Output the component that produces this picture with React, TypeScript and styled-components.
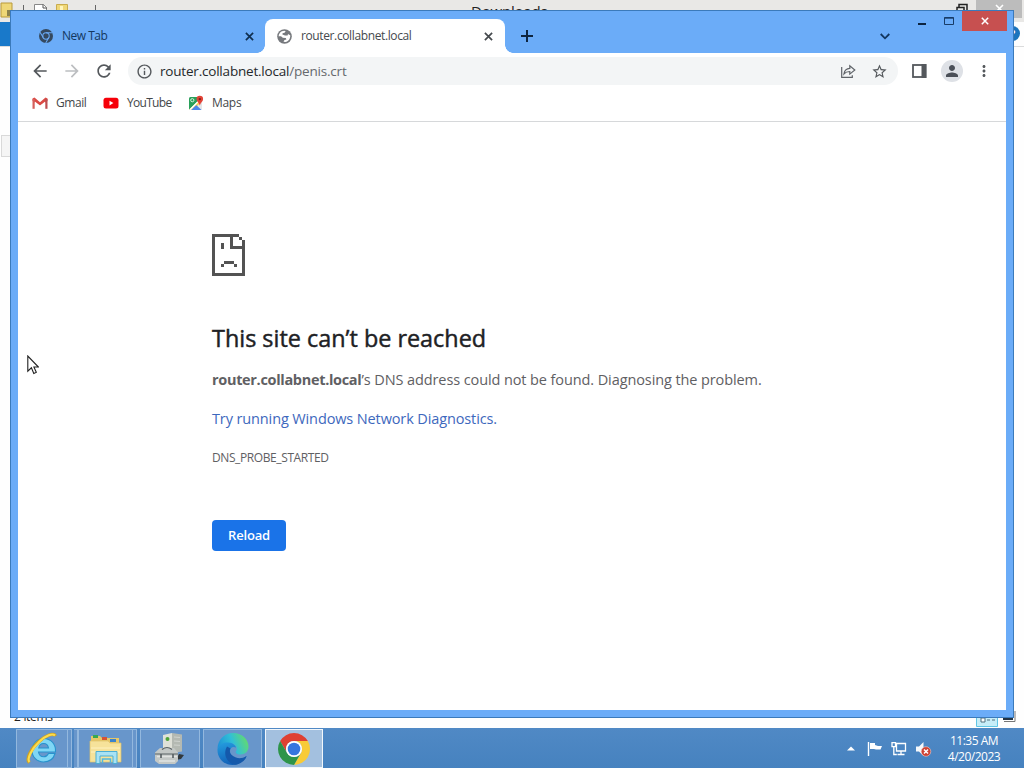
import React from 'react';
import styled, { createGlobalStyle } from 'styled-components';

const GlobalStyle = createGlobalStyle`
  * {
    box-sizing: border-box;
  }

  body {
    margin: 0;
    overflow: hidden;
    font-family: 'Open Sans', 'Noto Sans', sans-serif;
  }

  svg {
    display: block;
    flex: none;
  }
`;

const Desktop = styled.div`
  position: relative;
  display: flex;
  flex-direction: column;
  width: 1024px;
  height: 768px;
  overflow: hidden;
  background: #fff;
`;

const Label = styled.span<{ $size?: number; $spacing?: number }>`
  font-size: ${({ $size = 12 }) => $size}px;
  letter-spacing: ${({ $spacing = 0 }) => $spacing}px;
  line-height: 16px;
  white-space: nowrap;
`;

/* Explorer window behind the browser */

const Explorer = styled.div`
  display: flex;
  flex-direction: column;
  height: 728px;
  background: #fefefe;
`;

const ExplorerTitle = styled.div`
  display: flex;
  height: 22px;
  background: #e9e8e6;
  color: #222;
`;

const ExplorerTitleText = styled.div`
  display: flex;
  flex: 1;
  align-items: center;
  height: 22px;
  padding-left: 371px;
`;

const ExplorerButtons = styled.div`
  display: flex;
  gap: 8px;
  padding-right: 2px;
`;

const ExplorerClose = styled.div`
  display: flex;
  justify-content: center;
  width: 46px;
  height: 18px;
  background: #bcbcbc;
`;

const Ribbon = styled.div`
  display: flex;
  justify-content: space-between;
  height: 25px;
  border-bottom: 1px solid #dadbdc;
`;

const FileTab = styled.div`
  width: 54px;
  height: 24px;
  background: #1979ca;
`;

const HelpBadge = styled.div`
  width: 15px;
  height: 15px;
  margin: 4px 4px 0 0;
  border-radius: 50%;
  background: #1c74bd;
  color: #fff;
  font-size: 11px;
  font-weight: 700;
  line-height: 15px;
  text-align: center;
`;

const AddressStub = styled.div`
  width: 40px;
  height: 22px;
  margin: 88px 0 0 1px;
  border: 1px solid #d9d9d9;
  background: #f5f5f5;
`;

const ExplorerStatus = styled.div`
  display: flex;
  justify-content: space-between;
  height: 20px;
  margin-top: auto;
  padding: 0 8px 0 14px;
  color: #222;
`;

const ItemCount = styled(Label)`
  margin-top: 1px;
`;

const ViewSwitch = styled.div`
  display: flex;
  gap: 4px;
`;

/* Browser window */

const Browser = styled.div`
  position: absolute;
  top: 10px;
  left: 10px;
  display: flex;
  flex-direction: column;
  width: 1004px;
  height: 708px;
  padding: 0 7px 7px;
  border: 1px solid #3b7abb;
  background: #6bacf8;
`;

const TitleBar = styled.div`
  display: flex;
  flex: none;
  height: 42px;
`;

const Tab = styled.div<{ $active?: boolean }>`
  position: relative;
  display: flex;
  align-items: center;
  width: ${({ $active }) => ($active ? 240 : 247)}px;
  height: 34px;
  margin-top: 8px;
  padding: 0 ${({ $active }) => ($active ? 12 : 11)}px 0 ${({ $active }) => ($active ? 12 : 21)}px;
  border-radius: 8px 8px 0 0;
  background: ${({ $active }) => ($active ? '#fff' : 'transparent')};
  color: ${({ $active }) => ($active ? '#45494d' : '#14385f')};

  &::before,
  &::after {
    content: '';
    position: absolute;
    bottom: 0;
    display: ${({ $active }) => ($active ? 'block' : 'none')};
    width: 8px;
    height: 8px;
  }

  &::before {
    left: -8px;
    background: radial-gradient(circle at 0 0, transparent 7.5px, #fff 8px);
  }

  &::after {
    right: -8px;
    background: radial-gradient(circle at 100% 0, transparent 7.5px, #fff 8px);
  }
`;

const TabTitle = styled(Label)`
  flex: 1;
  margin-left: 9px;
`;

const NewTabButton = styled.div`
  margin: 19px 0 0 16px;
`;

const TabSearch = styled.div`
  margin: 22px 18px 0 auto;
`;

const Caption = styled.div`
  display: flex;
  align-items: flex-start;
  margin-right: -1px;
`;

const CaptionButton = styled.div<{ $close?: boolean }>`
  display: flex;
  align-items: center;
  justify-content: center;
  width: ${({ $close }) => ($close ? 45 : 27)}px;
  height: 20px;
  background: ${({ $close }) => ($close ? '#c75050' : 'transparent')};
`;

const Client = styled.div`
  display: flex;
  flex: 1;
  flex-direction: column;
  background: #fff;
`;

const Toolbar = styled.div`
  display: flex;
  align-items: center;
  height: 36px;
  padding: 0 12px;
`;

const NavButtons = styled.div`
  display: flex;
  gap: 12px;
  margin-right: 14px;
`;

const Omnibox = styled.div`
  display: flex;
  align-items: center;
  width: 770px;
  height: 28px;
  padding: 0 10px 0 8px;
  border-radius: 14px;
  background: #f3f5f6;
  color: #25282b;
`;

const Url = styled(Label)`
  flex: 1;
  margin-left: 7px;

  span {
    color: #65696d;
  }
`;

const OmniboxActions = styled.div`
  display: flex;
  align-items: center;
  gap: 15px;
`;

const Actions = styled.div`
  display: flex;
  align-items: center;
  margin-left: 14px;
`;

const Avatar = styled.div`
  display: flex;
  align-items: center;
  justify-content: center;
  width: 22px;
  height: 22px;
  margin: 0 12px 0 14px;
  border-radius: 50%;
  background: #dee1e6;
`;

const Bookmarks = styled.div`
  display: flex;
  align-items: center;
  height: 33px;
  padding: 0 14px 5px;
  border-bottom: 1px solid #d6d8da;
`;

const Bookmark = styled.div<{ $width: number }>`
  display: flex;
  align-items: center;
  gap: 8px;
  width: ${({ $width }) => $width}px;
  color: #44474a;
`;

const ErrorPage = styled.main`
  display: flex;
  flex-direction: column;
  align-items: flex-start;
  padding: 112px 0 0 194px;
  color: #5f6063;
`;

const Heading = styled.h1`
  margin: 46px 0 0;
  color: #202124;
  font-size: 23.4px;
  font-weight: 400;
  line-height: 32px;
  white-space: nowrap;
  -webkit-text-stroke: 0.45px #202124;
`;

const Message = styled.p`
  margin: 14px 0 0;
  font-size: 14.5px;
  letter-spacing: -0.1px;
  line-height: 24px;
  white-space: nowrap;

  strong {
    letter-spacing: -0.32px;
  }
`;

const Suggestion = styled.a`
  margin-top: 15px;
  color: #3d68bd;
  font-size: 14.5px;
  letter-spacing: -0.12px;
  line-height: 24px;
  white-space: nowrap;
`;

const ErrorCode = styled.div`
  margin-top: 15px;
  font-size: 12px;
  letter-spacing: -0.4px;
  line-height: 24px;
`;

const ReloadButton = styled.button`
  width: 74px;
  height: 31px;
  margin-top: 50px;
  padding: 0 0 2px;
  border: 0;
  border-radius: 4px;
  background: #1a73e8;
  color: #fff;
  font-family: 'Open Sans', sans-serif;
  font-size: 13px;
  font-weight: 600;
  letter-spacing: -0.2px;
`;

const Pointer = styled.div`
  position: absolute;
  top: 355px;
  left: 27px;
`;

/* Taskbar */

const Taskbar = styled.div`
  display: flex;
  height: 40px;
  padding-left: 16px;
  background: linear-gradient(#5089c5, #4682bf);
`;

const TaskButton = styled.div<{ $width: number; $gap: number; $active?: boolean }>`
  display: flex;
  align-items: center;
  justify-content: center;
  width: ${({ $width }) => $width}px;
  height: 39px;
  margin: 1px ${({ $gap }) => $gap}px 0 0;
  border: 1px solid ${({ $active }) => ($active ? '#f2f7fb' : '#93b8de')};
  background: ${({ $active }) => ($active ? '#a3c0df' : '#6896cb')};
`;

const StackEdge = styled.div<{ $gap: number }>`
  width: 4px;
  height: 39px;
  margin: 1px ${({ $gap }) => $gap}px 0 0;
  border: 1px solid #93b8de;
  border-left: 0;
  background: #6896cb;
`;

const Tray = styled.div`
  display: flex;
  align-items: center;
  gap: 8px;
  margin-left: auto;
  padding: 1px 23px 0 0;
  color: #fff;
`;

const TrayArrow = styled.div`
  margin-right: 4px;
`;

const Clock = styled.div`
  display: flex;
  flex-direction: column;
  align-items: center;
  width: 54px;
  margin-left: 7px;
`;

interface IconProps {
  d: string;
  size?: number;
  color?: string;
}

const Icon: React.FC<IconProps> = ({ d, size = 20, color = '#54585c' }) => (
  <svg width={size} height={size} viewBox="0 0 24 24" fill={color}>
    <path d={d} />
  </svg>
);

const paths = {
  back: 'M20 11H7.83l5.59-5.59L12 4l-8 8 8 8 1.41-1.41L7.83 13H20v-2z',
  forward: 'M12 4l-1.41 1.41L16.17 11H4v2h12.17l-5.58 5.59L12 20l8-8z',
  reload:
    'M17.65 6.35C16.2 4.9 14.21 4 12 4c-4.42 0-7.99 3.58-7.99 8s3.57 8 7.99 8c3.73 0 6.84-2.55 7.73-6h-2.08c-.82 2.33-3.04 4-5.65 4-3.31 0-6-2.69-6-6s2.69-6 6-6c1.66 0 3.14.69 4.22 1.78L13 11h7V4l-2.35 2.35z',
  info: 'M11 7h2v2h-2zm0 4h2v6h-2zm1-9C6.48 2 2 6.48 2 12s4.48 10 10 10 10-4.48 10-10S17.52 2 12 2zm0 18c-4.41 0-8-3.59-8-8s3.59-8 8-8 8 3.59 8 8-3.59 8-8 8z',
  star: 'M22 9.24l-7.19-.62L12 2 9.19 8.63 2 9.24l5.46 4.73L5.82 21 12 17.27 18.18 21l-1.63-7.03L22 9.24zM12 15.4l-3.76 2.27 1-4.28-3.32-2.88 4.38-.38L12 6.1l1.71 4.04 4.38.38-3.32 2.88 1 4.28L12 15.4z',
  person:
    'M12 12c2.21 0 4-1.79 4-4s-1.79-4-4-4-4 1.79-4 4 1.79 4 4 4zm0 2c-2.67 0-8 1.34-8 4v2h16v-2c0-2.66-5.33-4-8-4z',
  more: 'M12 8c1.1 0 2-.9 2-2s-.9-2-2-2-2 .9-2 2 .9 2 2 2zm0 2c-1.1 0-2 .9-2 2s.9 2 2 2 2-.9 2-2-.9-2-2-2zm0 6c-1.1 0-2 .9-2 2s.9 2 2 2 2-.9 2-2-.9-2-2-2z',
};

interface ChromeLogoProps {
  size: number;
  colors: string[];
}

const ChromeLogo: React.FC<ChromeLogoProps> = ({ size, colors }) => {
  const [red, yellow, green, ring, center] = colors;
  return (
    <svg width={size} height={size} viewBox="0 0 48 48">
      <path fill={red} d="M24 12H44.78A24 24 0 0 0 3.22 12L13.61 30A12 12 0 0 1 24 12z" />
      <path fill={yellow} d="M34.39 30L24 48A24 24 0 0 0 44.78 12H24A12 12 0 0 1 34.39 30z" />
      <path fill={green} d="M13.61 30L3.22 12A24 24 0 0 0 24 48L34.39 30A12 12 0 0 1 13.61 30z" />
      <circle cx="24" cy="24" r="12" fill={ring} />
      <circle cx="24" cy="24" r="9.5" fill={center} />
    </svg>
  );
};

const MonoChromeLogo: React.FC = () => (
  <svg width="14" height="14" viewBox="0 0 48 48">
    <circle cx="24" cy="24" r="24" fill="#35495f" />
    <g stroke="#6bacf8" strokeWidth="3.5" fill="none">
      <path d="M24 13H46M14.5 29.5L3.5 11M33.5 29.5L23 48" />
      <circle cx="24" cy="24" r="11" />
    </g>
  </svg>
);

const Close: React.FC<{ color: string; size?: number }> = ({ color, size = 9 }) => (
  <svg width={size} height={size} viewBox="0 0 10 10" stroke={color} strokeWidth="1.9">
    <path d="M1 1l8 8M9 1l-8 8" />
  </svg>
);

const Globe: React.FC = () => (
  <svg width="15" height="15" viewBox="0 0 15 15">
    <circle cx="7.5" cy="7.5" r="7.3" fill="#76797d" />
    <path
      d="M1.7 7.5C1.6 4.3 4 2 7.2 1.7L8.7 2.2 7.5 3.7 5.6 4.2 5.4 5.6 8 6.6 10.6 6.5 11 4.9 13.2 6.2C13.6 9.5 11.4 12.3 8.5 13.1L6.5 12.8 7.5 11.1 9.4 10.5 8.8 9 5.5 8.8 4.1 7.4z"
      fill="#fff"
    />
    <path d="M1.7 7.5L4.1 7.4 5.5 8.8 6.1 11 5 12.6A6 6 0 0 1 1.7 7.5z" fill="#76797d" />
  </svg>
);

const GmailIcon: React.FC = () => (
  <svg width="16" height="16" viewBox="0 0 16 16">
    <path fill="#db4a44" d="M.5 3.5L2.5 2.5 8 7.2l5.5-4.7 2 1V6L8 11 .5 6z" />
    <path fill="#fff" d="M2.8 6.5L8 10.6l5.2-4.1V14H2.8z" />
    <path fill="#d5605c" d="M.5 4h2.2v9.8H.5z" />
    <path fill="#bd4e51" d="M13.3 4h2.2v9.8h-2.2z" />
  </svg>
);

const YouTubeIcon: React.FC = () => (
  <svg width="16" height="16" viewBox="0 0 16 16">
    <rect x=".5" y="2.7" width="15" height="10.7" rx="2.5" fill="#f60009" />
    <path d="M6.5 5.8v4.6L10.4 8.1z" fill="#fff" />
  </svg>
);

const MapsIcon: React.FC = () => (
  <svg width="16" height="16" viewBox="0 0 16 16">
    <rect x="1" y="2" width="13" height="13" rx="1.5" fill="#e4e6e8" />
    <path fill="#29a05a" d="M1 3.5Q1 2 2.5 2H10L9.5 6.5 1.3 14.6Q1 14 1 13z" />
    <path fill="#f7cf45" d="M1.3 14.7L10 6l2 2-6.5 7H2.5z" />
    <path fill="#4d86e8" d="M3 15l5.2-5 5.3 5z" />
    <path fill="#fff" d="M1.5 14.2L10 5.8l1 1L2.8 15z" />
    <circle cx="4.3" cy="5.2" r="1.6" fill="none" stroke="#d9f0df" />
    <path fill="#e34336" d="M11.8.8a3.3 3.3 0 0 1 3.3 3.3c0 2.5-2.5 3.5-3.3 6.3-.8-2.8-3.3-3.8-3.3-6.3A3.3 3.3 0 0 1 11.8.8z" />
    <circle cx="11.8" cy="4.1" r="1.2" fill="#7a1f1b" />
  </svg>
);

const ShareIcon: React.FC = () => (
  <svg width="16" height="16" viewBox="0 0 16 16" fill="none" stroke="#5f6368" strokeWidth="1.2">
    <path d="M1.7 4v10.3h10.6v-2" />
    <path d="M4 10.8C4.4 7.8 6.2 5.6 9.8 5.4V2.7l5 4.3-5 4.1V8.5C7.2 8.5 5.3 9.2 4 10.8z" />
  </svg>
);

const SidePanelIcon: React.FC = () => (
  <svg width="15" height="14" viewBox="0 0 15 14">
    <rect x="1" y="1" width="12.5" height="12" fill="none" stroke="#54585c" strokeWidth="1.8" />
    <rect x="9.5" y="0" width="4.9" height="14" fill="#54585c" />
  </svg>
);

// Drawn on an 11 x 14 grid of 3px squares
const SadPage: React.FC = () => (
  <svg width="33" height="42" viewBox="0 0 11 14" fill="#535353" shapeRendering="crispEdges">
    <path d="M0 0h9v1H0zM0 0h1v14H0zM0 13h11v1H0zM10 2h1v12h-1zM9 1h1v1H9zM6 0h1v5H6zM6 4h5v1H6zM3 3h1v2H3zM4 9h3.4v1H4zM3 10h1v1H3zM7.4 10h1v1h-1z" />
  </svg>
);

const ExplorerQuickAccess: React.FC = () => (
  <svg width="100" height="22" viewBox="0 0 100 22">
    <path d="M1 3h11v14H1z" fill="#efd777" stroke="#b99a3c" />
    <path d="M7 10h5v6H7z" fill="#8b814d" />
    <path d="M23.5 5v9M95.5 5v9" stroke="#666" />
    <path d="M34.5 17V4.5h9l3 3V17" fill="#fff" stroke="#888" />
    <path d="M43 4.5V8h4" fill="none" stroke="#555" />
    <path d="M56.5 4.5h11V16h-11z" fill="#efd777" stroke="#c9ac4e" />
    <path d="M60 6h3v5h-3z" fill="#fff5bd" />
  </svg>
);

const InternetExplorerIcon: React.FC = () => (
  <svg width="34" height="34" viewBox="0 0 34 34">
    <path
      d="M30 21.5C28.5 27 24 30 18.5 30 12 30 7 25 7 18.5S12 6.5 18.5 6.5C26 6.5 31 12 30.5 20H13.5C14 23 16 24.8 18.8 24.8 21 24.8 22.5 23.5 23.5 21.5zM13.7 16H23.5C23 13 21 11.5 18.7 11.5 16 11.5 14.2 13.3 13.7 16z"
      fill="#7fd6f5"
      fillRule="evenodd"
      stroke="#2792cd"
      strokeWidth="1.1"
    />
    <path d="M4.5 30.5C.5 27.5 6 16.5 14 9.5 21 3 28.5.5 30.5 4" fill="none" stroke="#d0a11f" strokeWidth="3.4" />
    <path d="M4.5 30C1.5 27 7 16.5 14.5 9.5 21 3.5 27.5 1 30 3.5" fill="none" stroke="#fbdc4e" strokeWidth="2.2" />
  </svg>
);

const FolderIcon: React.FC = () => (
  <svg width="34" height="32" viewBox="0 0 34 32">
    <path d="M2 5V3h9l2 2h17v24H2z" fill="#e7c768" />
    <path d="M4 2h5v3H4z" fill="#36a852" />
    <path d="M13 4h5v3h-5z" fill="#d65335" />
    <path d="M21 6h6v3h-6z" fill="#3c83cb" />
    <path d="M1 8h18l2 2h11v19H1z" fill="#f6e29a" stroke="#dfc36b" strokeWidth=".7" />
    <path d="M2 15h29M2 19h29" stroke="#fff2bf" />
    <path d="M7 30.5V18.5h21v12h-4V23H11v7.5z" fill="#a8e2f4" stroke="#4baed3" />
    <path d="M13.5 30v-4h8v4" fill="none" stroke="#4fb8df" strokeWidth="1.5" />
  </svg>
);

const ServerIcon: React.FC = () => (
  <svg width="34" height="34" viewBox="0 0 34 34">
    <path d="M10 3l9-2v20l-9 1z" fill="#dfe1d8" />
    <path d="M19 1l10 1.5v17L19 21z" fill="#b4b9b2" />
    <path d="M21 5l6 .5M21 9l6 .5M21 13l6 .3" stroke="#cfd3ce" />
    <circle cx="14.5" cy="7" r="2" fill="#4ea23a" />
    <path d="M26 22l5 1-3 4-5 1z" fill="#32383b" />
    <path d="M2 20.5L7 16h14l4 4.5V29l-3 3H6l-4-3z" fill="#c3c8c6" />
    <path d="M2 22h23M9 17.5q5-4 10 0" fill="none" stroke="#5a6265" strokeWidth="1.2" />
    <path d="M4 24.5h20M6 29h16" stroke="#e1e4e2" strokeWidth="1.6" />
    <path d="M8 22v4M20 22v4" stroke="#565e61" strokeWidth="1.6" />
  </svg>
);

const EdgeIcon: React.FC = () => (
  <svg width="34" height="34" viewBox="0 0 34 34">
    <defs>
      <linearGradient id="edge-top" x1="0" y1=".6" x2="1" y2=".3">
        <stop offset="0" stopColor="#1d8fd8" />
        <stop offset=".5" stopColor="#31bfd7" />
        <stop offset="1" stopColor="#66dc68" />
      </linearGradient>
      <linearGradient id="edge-side" x1="0" y1="0" x2=".3" y2="1">
        <stop offset="0" stopColor="#249ee0" />
        <stop offset="1" stopColor="#1261b8" />
      </linearGradient>
    </defs>
    <path
      d="M1.5 17C1.5 8 8 1 17 1c9.5 0 15.5 7 15.5 13.5 0 5-3.5 8-8 8-3.5 0-5.5-1.5-4.5-3 2.5-4-1-8.5-7-8.5C7 11 3 13 1.5 17z"
      fill="url(#edge-top)"
    />
    <path
      d="M1.5 17C3 12.5 7 10 12.5 10.5c4 .4 7 2.5 7.5 5-3-1.5-6 0-6 3.500 0 5 4.500 8.500 10 8 2.500-.3 4.500-1.500 6.500-3-3 5.500-8 9-14 9C8 33 1 26 1.5 17z"
      fill="url(#edge-side)"
    />
    <path
      d="M11 14.5C6.5 22.5 11 31 19 32.8 25 32 29.5 28 30.7 24 27 26.3 23 26.8 20 25.5c-5-2-7.5-5-5.5-9z"
      fill="#1559ab"
    />
  </svg>
);

const FlagIcon: React.FC = () => (
  <svg width="16" height="16" viewBox="0 0 16 16">
    <path d="M1.5 1v14" stroke="#fff" strokeWidth="1.4" />
    <path d="M3 2h5v2l3 1h4l-1.5 3.5H9L7 8H3z" fill="#fff" />
  </svg>
);

const NetworkIcon: React.FC = () => (
  <svg width="16" height="16" viewBox="0 0 16 16" fill="none" stroke="#fff" strokeWidth="1.3">
    <path d="M5.5 2.5h9V10h-9zM10 10v3M6.5 13.5h7" />
    <path d="M1 1.7h3.5v4H1zM2.8 6v7.5h3" />
  </svg>
);

const VolumeIcon: React.FC = () => (
  <svg width="17" height="16" viewBox="0 0 17 16">
    <path d="M1 5.5h3L8.5 1v14L4 10.5H1z" fill="#f5f8fb" />
    <circle cx="11" cy="10.5" r="4.8" fill="#cf4132" stroke="#f2d0ca" strokeWidth=".6" />
    <path d="M9 8.5l4 4M13 8.5l-4 4" stroke="#fff" strokeWidth="1.5" />
  </svg>
);

const App: React.FC = () => {
  return (
    <Desktop>
      <GlobalStyle />
      <Explorer>
        <ExplorerTitle>
          <ExplorerQuickAccess />
          <ExplorerTitleText>
            <Label $size={15} $spacing={-0.2}>Downloads</Label>
          </ExplorerTitleText>
          <ExplorerButtons>
            <svg width="12" height="14" viewBox="0 0 12 14" fill="none" stroke="#222" strokeWidth="1.5">
              <path d="M3 7V4.5h8V12M1 14V7.5h7V14" />
            </svg>
            <ExplorerClose>
              <svg width="9" height="14" viewBox="0 0 9 14" stroke="#fff" strokeWidth="1.6">
                <path d="M1 5l7 7M8 5l-7 7" />
              </svg>
            </ExplorerClose>
          </ExplorerButtons>
        </ExplorerTitle>
        <Ribbon>
          <FileTab />
          <HelpBadge>?</HelpBadge>
        </Ribbon>
        <AddressStub />
        <ExplorerStatus>
          <ItemCount $spacing={-0.3}>2 items</ItemCount>
          <ViewSwitch>
            <svg width="22" height="20" viewBox="0 0 22 20">
              <path d="M.5.5h21v18H.5z" fill="#c6edf8" stroke="#60c5e5" />
              <path d="M5 10h4v4H5zM11 12h3M16 12h3" fill="#fff" stroke="#52717e" />
            </svg>
            <svg width="14" height="20" viewBox="0 0 14 20" fill="none">
              <path d="M2 13.5h11V3" stroke="#777" />
              <path d="M1 11h10" stroke="#234" strokeWidth="2" />
            </svg>
          </ViewSwitch>
        </ExplorerStatus>
      </Explorer>

      <Taskbar>
        <TaskButton $width={52} $gap={0}>
          <InternetExplorerIcon />
        </TaskButton>
        <StackEdge $gap={2} />
        <StackEdge $gap={0} />
        <TaskButton $width={55} $gap={0}>
          <FolderIcon />
        </TaskButton>
        <StackEdge $gap={3} />
        <TaskButton $width={60} $gap={3}>
          <ServerIcon />
        </TaskButton>
        <TaskButton $width={59} $gap={3}>
          <EdgeIcon />
        </TaskButton>
        <TaskButton $width={58} $gap={0} $active>
          <ChromeLogo size={32} colors={['#df4032', '#f8cb38', '#2e9449', '#fff', '#3676df']} />
        </TaskButton>
        <Tray>
          <TrayArrow>
            <svg width="8" height="5" viewBox="0 0 8 5" fill="#fff">
              <path d="M4 .5l4 4H0z" />
            </svg>
          </TrayArrow>
          <FlagIcon />
          <NetworkIcon />
          <VolumeIcon />
          <Clock>
            <Label $spacing={-0.5}>11:35 AM</Label>
            <Label $spacing={-0.5}>4/20/2023</Label>
          </Clock>
        </Tray>
      </Taskbar>

      <Browser>
        <TitleBar>
          <Tab>
            <MonoChromeLogo />
            <TabTitle $spacing={-0.5}>New Tab</TabTitle>
            <Close color="#102f50" />
          </Tab>
          <Tab $active>
            <Globe />
            <TabTitle $spacing={-0.38}>router.collabnet.local</TabTitle>
            <Close color="#45494d" />
          </Tab>
          <NewTabButton>
            <svg width="12" height="12" viewBox="0 0 12 12" stroke="#0d2440" strokeWidth="2">
              <path d="M6 0v12M0 6h12" />
            </svg>
          </NewTabButton>
          <TabSearch>
            <svg width="10" height="7" viewBox="0 0 10 7" fill="none" stroke="#12365f" strokeWidth="1.8">
              <path d="M.7 1L5 5.3 9.3 1" />
            </svg>
          </TabSearch>
          <Caption>
            <CaptionButton>
              <svg width="8" height="10" viewBox="0 0 8 10">
                <path d="M0 7h8v2H0z" fill="#0d2440" />
              </svg>
            </CaptionButton>
            <CaptionButton>
              <svg width="10" height="8" viewBox="0 0 10 8" fill="none" stroke="#183c68">
                <path d="M.5.5h9v7h-9zM0 1.2h10" />
              </svg>
            </CaptionButton>
            <CaptionButton $close>
              <Close color="#fff" size={8} />
            </CaptionButton>
          </Caption>
        </TitleBar>
        <Client>
          <Toolbar>
            <NavButtons>
              <Icon d={paths.back} />
              <Icon d={paths.forward} color="#bcbec1" />
              <Icon d={paths.reload} />
            </NavButtons>
            <Omnibox>
              <Icon d={paths.info} size={17} />
              <Url $size={13.5} $spacing={-0.2}>
                router.collabnet.local<span>/penis.crt</span>
              </Url>
              <OmniboxActions>
                <ShareIcon />
                <Icon d={paths.star} size={17} />
              </OmniboxActions>
            </Omnibox>
            <Actions>
              <SidePanelIcon />
              <Avatar>
                <Icon d={paths.person} size={18} color="#4b5058" />
              </Avatar>
              <Icon d={paths.more} size={18} />
            </Actions>
          </Toolbar>
          <Bookmarks>
            <Bookmark $width={71}>
              <GmailIcon />
              <Label $spacing={-0.45}>Gmail</Label>
            </Bookmark>
            <Bookmark $width={85}>
              <YouTubeIcon />
              <Label $spacing={-0.7}>YouTube</Label>
            </Bookmark>
            <Bookmark $width={60}>
              <MapsIcon />
              <Label $spacing={-0.3}>Maps</Label>
            </Bookmark>
          </Bookmarks>
          <ErrorPage>
            <SadPage />
            <Heading>This site can’t be reached</Heading>
            <Message>
              <strong>router.collabnet.local</strong>’s DNS address could not be found. Diagnosing the problem.
            </Message>
            <Suggestion>Try running Windows Network Diagnostics.</Suggestion>
            <ErrorCode>DNS_PROBE_STARTED</ErrorCode>
            <ReloadButton>Reload</ReloadButton>
          </ErrorPage>
        </Client>
      </Browser>

      <Pointer>
        <svg width="12" height="20" viewBox="0 0 12 20">
          <path
            d="M.8 1v15.200l3.600-3.400 2.400 5.600 2.500-1.100-2.400-5.300h4.500z"
            fill="#fff"
            stroke="#222"
            strokeWidth="1.1"
          />
        </svg>
      </Pointer>
    </Desktop>
  );
};

export default App;
